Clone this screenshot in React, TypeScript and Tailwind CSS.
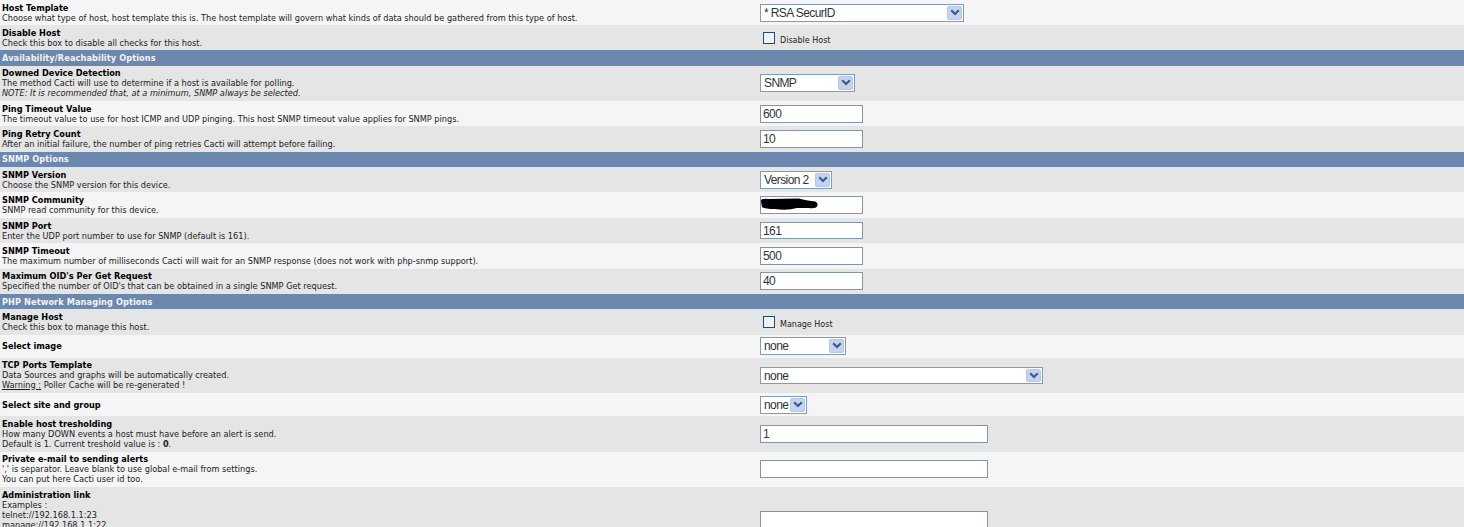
import React from "react";

const LIGHT = "bg-[#f5f5f5]";
const DARK = "bg-[#e5e5e5]";

function Arrow() {
  return (
    <span className="flex w-[15px] shrink-0 items-center justify-center self-stretch rounded-[2px] border border-[#b4c8ea] bg-[#c3d3f3]">
      <svg width="10" height="7" viewBox="0 0 10 7" aria-hidden="true">
        <path d="M1.2 1.2 L5 5 L8.8 1.2" fill="none" stroke="#44597f" strokeWidth="2.2" />
      </svg>
    </span>
  );
}

function Select({ label, className }: { label: string; className: string }) {
  return (
    <div className={`flex items-stretch border border-[#7f9db9] bg-white p-px font-['Liberation_Sans',sans-serif] text-[12px] leading-[14px] tracking-[-0.6px] text-[#333] ${className}`}>
      <span className="flex flex-1 items-center pl-[2px] whitespace-nowrap">{label}</span>
      <Arrow />
    </div>
  );
}

function TextInput({ value, className }: { value: string; className: string }) {
  return (
    <input
      readOnly
      value={value}
      className={`block border border-[#8595a5] bg-white px-[2px] font-['Liberation_Sans',sans-serif] text-[12px] tracking-[-0.6px] text-[#333] outline-none ${className}`}
    />
  );
}

function Check({ label }: { label: string }) {
  return (
    <div className="flex items-start pl-[3px]">
      <span className="mt-[2px] h-[12px] w-[12px] border border-[#1f4a70] bg-[#f0f3f5]" />
      <span className="mt-[6px] ml-[5px] text-[8px] leading-[10px] text-[#222]">{label}</span>
    </div>
  );
}

function Row({
  h,
  bg,
  title,
  children,
  control,
  up,
  textUp,
}: {
  h: string;
  bg: string;
  title: string;
  children?: React.ReactNode;
  control: React.ReactNode;
  up?: boolean;
  textUp?: boolean;
}) {
  return (
    <div className={`flex items-center ${h} ${bg} ${up ? "pb-[2px]" : ""}`}>
      <div className={`w-[760px] shrink-0 pl-[2px] text-[8.2px] leading-[10px] text-[#222] ${textUp ? "pb-[2px]" : ""}`}>
        <div className="font-bold text-black">{title}</div>
        {children}
      </div>
      <div>{control}</div>
    </div>
  );
}

function Header({ h, title, down }: { h: string; title: string; down?: boolean }) {
  return (
    <div className={`flex items-center bg-[#6d88ad] pl-[2px] text-[8.2px] font-bold tracking-[0.1px] text-[#f2f4f7] ${h} ${down ? "pt-[2px]" : ""}`}>
      {title}
    </div>
  );
}

export default function App() {
  return (
    <div className="h-[527px] w-[1464px] overflow-hidden bg-white font-['DejaVu_Sans',Verdana,sans-serif]">
      <Row h="h-[25px]" bg={LIGHT} title="Host Template" control={<Select label="* RSA SecurID" className="h-[18px] w-[204px]" />}>
        Choose what type of host, host template this is. The host template will govern what kinds of data should be gathered from this type of host.
      </Row>
      <Row h="h-[25px]" bg={DARK} title="Disable Host" control={<Check label="Disable Host" />}>
        Check this box to disable all checks for this host.
      </Row>
      <Header h="h-[16px]" title="Availability/Reachability Options" />
      <Row up h="h-[35px]" bg={DARK} title="Downed Device Detection" control={<Select label="SNMP" className="h-[18px] w-[95px]" />}>
        The method Cacti will use to determine if a host is available for polling.
        <br />
        <i>NOTE: It is recommended that, at a minimum, SNMP always be selected.</i>
      </Row>
      <Row h="h-[25px]" bg={LIGHT} title="Ping Timeout Value" control={<TextInput value="600" className="h-[18px] w-[103px]" />}>
        The timeout value to use for host ICMP and UDP pinging. This host SNMP timeout value applies for SNMP pings.
      </Row>
      <Row h="h-[26px]" bg={DARK} title="Ping Retry Count" control={<TextInput value="10" className="h-[18px] w-[103px]" />}>
        After an initial failure, the number of ping retries Cacti will attempt before failing.
      </Row>
      <Header h="h-[15px]" title="SNMP Options" />
      <Row h="h-[25px]" bg={DARK} title="SNMP Version" control={<Select label="Version 2" className="h-[18px] w-[72px]" />}>
        Choose the SNMP version for this device.
      </Row>
      <Row
        h="h-[26px]"
        bg={LIGHT}
        title="SNMP Community"
        control={
          <div className="relative">
            <TextInput value="" className="h-[18px] w-[103px]" />
            <svg className="absolute top-[2px] left-px" width="58" height="13" viewBox="0 0 58 13" aria-hidden="true">
              <path d="M0 2 Q1 0 8 1 L38 0.5 Q44 2 50 3 Q57 3 56.5 7 Q56 11 48 10 L36 10 Q26 13 14 11 Q4 11 1 9 Q0 5 0 2 Z" fill="#000" />
            </svg>
          </div>
        }
      >
        SNMP read community for this device.
      </Row>
      <Row h="h-[25px]" bg={DARK} title="SNMP Port" control={<TextInput value="161" className="h-[17px] w-[103px]" />}>
        Enter the UDP port number to use for SNMP (default is 161).
      </Row>
      <Row h="h-[26px]" bg={LIGHT} title="SNMP Timeout" control={<TextInput value="500" className="h-[18px] w-[103px]" />}>
        The maximum number of milliseconds Cacti will wait for an SNMP response (does not work with php-snmp support).
      </Row>
      <Row up h="h-[25px]" bg={DARK} title="Maximum OID's Per Get Request" control={<TextInput value="40" className="h-[18px] w-[103px]" />}>
        Specified the number of OID's that can be obtained in a single SNMP Get request.
      </Row>
      <Header down h="h-[15px]" title="PHP Network Managing Options" />
      <Row h="h-[26px]" bg={DARK} title="Manage Host" control={<Check label="Manage Host" />}>
        Check this box to manage this host.
      </Row>
      <Row up h="h-[23px]" bg={LIGHT} title="Select image" control={<Select label="none" className="h-[18px] w-[86px]" />} />
      <Row textUp h="h-[35px]" bg={DARK} title="TCP Ports Template" control={<Select label="none" className="h-[17px] w-[283px]" />}>
        Data Sources and graphs will be automatically created.
        <br />
        <u>Warning :</u> Poller Cache will be re-generated !
      </Row>
      <Row h="h-[23px]" bg={LIGHT} title="Select site and group" control={<Select label="none" className="h-[18px] w-[47px]" />} />
      <Row h="h-[36px]" bg={DARK} title="Enable host tresholding" control={<TextInput value="1" className="h-[18px] w-[228px]" />}>
        How many DOWN events a host must have before an alert is send.
        <br />
        Default is 1. Current treshold value is : <b>0</b>.
      </Row>
      <Row up h="h-[35px]" bg={LIGHT} title="Private e-mail to sending alerts" control={<TextInput value="" className="h-[18px] w-[228px]" />}>
        ',' is separator. Leave blank to use global e-mail from settings.
        <br />
        You can put here Cacti user id too.
      </Row>
      <Row up h="h-[68px]" bg={DARK} title="Administration link" control={<TextInput value="" className="h-[18px] w-[228px]" />}>
        Examples :
        <br />
        telnet://192.168.1.1:23
        <br />
        manage://192.168.1.1:22
        <br />
        &nbsp;
        <br />
        &nbsp;
      </Row>
    </div>
  );
}
